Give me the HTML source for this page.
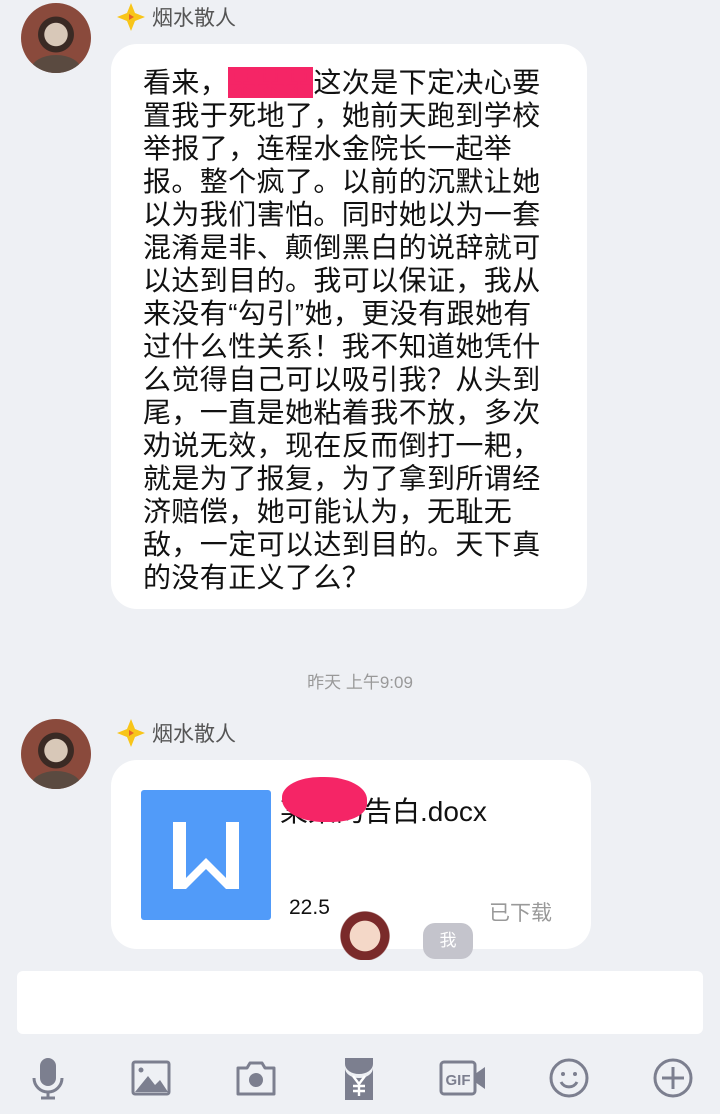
<!DOCTYPE html>
<html><head><meta charset="utf-8"><style>
*{margin:0;padding:0;box-sizing:border-box}
body{width:720px;height:1114px;background:#eef0f4;position:relative;overflow:hidden;font-family:"Liberation Sans","Noto Sans CJK SC",sans-serif}
.av{position:absolute;left:21px;width:70px;height:70px;border-radius:50%;background:radial-gradient(circle at 50% 45%,#d8c8b8 0 22%,#3a2a24 23% 34%,#8a4a3c 35%);overflow:hidden}
.av:after{content:"";position:absolute;left:10px;top:52px;width:50px;height:30px;border-radius:50% 50% 0 0;background:#5a4a40}
.name{position:absolute;left:116px;font-size:21px;color:#555;display:flex;align-items:center;gap:6px}
.star{width:30px;height:30px;position:relative}
.bub{position:absolute;left:111px;background:#fff;border-radius:26px}
.txt{position:absolute;left:143px;top:66px;font-size:28px;line-height:33px;color:#111;letter-spacing:0.4px}
.time{position:absolute;top:668px;width:100%;text-align:center;color:#999;font-size:17px}
.input{position:absolute;left:17px;top:971px;width:686px;height:63px;background:#fff;border-radius:6px}
.icons svg{position:absolute;top:1056px}
</style></head><body>
<div class="av" style="top:3px"></div>
<div class="name" style="top:2px"><svg class="star" viewBox="0 0 30 30"><path d="M15 1 L19 11 L29 15 L19 19 L15 29 L11 19 L1 15 L11 11Z" fill="#f8c519"/><path d="M13 12l5 3-5 3z" fill="#e5632a"/></svg>烟水散人</div>
<div class="bub" style="top:44px;width:476px;height:565px"></div>
<div class="txt">看来，<span style="color:#f52566;background:#f52566">某某某</span>这次是下定决心要<br>置我于死地了，她前天跑到学校<br>举报了，连程水金院长一起举<br>报。整个疯了。以前的沉默让她<br>以为我们害怕。同时她以为一套<br>混淆是非、颠倒黑白的说辞就可<br>以达到目的。我可以保证，我从<br>来没有“勾引”她，更没有跟她有<br>过什么性关系！我不知道她凭什<br>么觉得自己可以吸引我？从头到<br>尾，一直是她粘着我不放，多次<br>劝说无效，现在反而倒打一耙，<br>就是为了报复，为了拿到所谓经<br>济赔偿，她可能认为，无耻无<br>敌，一定可以达到目的。天下真<br>的没有正义了么？</div>
<div class="time">昨天 上午9:09</div>
<div class="av" style="top:719px"></div>
<div class="name" style="top:718px"><svg class="star" viewBox="0 0 30 30"><path d="M15 1 L19 11 L29 15 L19 19 L15 29 L11 19 L1 15 L11 11Z" fill="#f8c519"/><path d="M13 12l5 3-5 3z" fill="#e5632a"/></svg>烟水散人</div>
<div class="bub" style="top:760px;width:480px;height:189px"></div>
<div style="position:absolute;left:141px;top:790px;width:130px;height:130px;background:#519bf9;border-radius:3px"><svg width="130" height="130" viewBox="0 0 130 130"><path d="M32 32h13v56l20-20 20 20V32h13v67H85L65 79 45 99H32z" fill="#fff"/></svg></div>
<div style="position:absolute;left:280px;top:790px;font-size:28px;color:#111">某某的告白.docx</div>
<div style="position:absolute;left:282px;top:777px;width:85px;height:45px;background:#f52566;border-radius:45% 50% 40% 50%"></div>
<div style="position:absolute;left:289px;top:896px;font-size:21px;color:#111">22.5</div>
<div style="position:absolute;left:489px;top:897px;font-size:21px;color:#999">已下载</div>
<div style="position:absolute;left:330px;top:900px;width:70px;height:60px;background:radial-gradient(circle at 50% 60%,#f4d8c8 0 30%,#7a2a2a 31% 48%,transparent 50%)"></div>
<div style="position:absolute;left:423px;top:923px;width:50px;height:36px;background:#c4c4cc;border-radius:12px;color:#fff;font-size:17px;text-align:center;line-height:36px">我</div>
<div class="input"></div>
<div class="icons">
<svg style="left:28px" width="40" height="46" viewBox="0 0 40 46"><rect x="12" y="2" width="16" height="28" rx="8" fill="#7c7f8f"/><path d="M6 22a14 14 0 0 0 28 0" stroke="#7c7f8f" stroke-width="3" fill="none"/><path d="M20 36v5M13 42h14" stroke="#7c7f8f" stroke-width="3"/></svg>
<svg style="left:130px" width="44" height="44" viewBox="0 0 44 44"><rect x="3" y="6" width="36" height="32" rx="2" stroke="#7c7f8f" stroke-width="3" fill="none"/><path d="M5 36l13-16 7 9 5-5 8 12z" fill="#7c7f8f"/><circle cx="11" cy="14" r="2.5" fill="#7c7f8f"/></svg>
<svg style="left:234px" width="44" height="44" viewBox="0 0 44 44"><path d="M4 12h9l3-5h12l3 5h9v26H4z" stroke="#7c7f8f" stroke-width="3" fill="none" stroke-linejoin="round"/><circle cx="22" cy="24" r="7" fill="#7c7f8f"/></svg>
<svg style="left:343px" width="32" height="46" viewBox="0 0 32 46"><path d="M2 2h28v6a14 10 0 0 1-28 0z" fill="#7c7f8f"/><path d="M2 12a14 10 0 0 0 28 0v32H2z" fill="#7c7f8f"/><path d="M10 20l6 8 6-8M16 28v12M10 30h12M10 35h12" stroke="#fff" stroke-width="2.4" fill="none"/></svg>
<svg style="left:438px" width="50" height="44" viewBox="0 0 50 44"><rect x="3" y="6" width="34" height="32" rx="3" stroke="#7c7f8f" stroke-width="3" fill="none"/><path d="M37 18l10-7v22l-10-7z" fill="#7c7f8f"/><text x="20" y="29" font-size="15" font-weight="bold" fill="#7c7f8f" text-anchor="middle" font-family="Liberation Sans">GIF</text></svg>
<svg style="left:547px" width="44" height="44" viewBox="0 0 44 44"><circle cx="22" cy="22" r="18" stroke="#7c7f8f" stroke-width="3" fill="none"/><circle cx="16" cy="18" r="2" fill="#7c7f8f"/><circle cx="28" cy="18" r="2" fill="#7c7f8f"/><path d="M14 26a9 9 0 0 0 16 0" stroke="#7c7f8f" stroke-width="3" fill="none"/></svg>
<svg style="left:651px" width="44" height="44" viewBox="0 0 44 44"><circle cx="22" cy="22" r="18" stroke="#7c7f8f" stroke-width="3" fill="none"/><path d="M22 11v22M11 22h22" stroke="#7c7f8f" stroke-width="3"/></svg>
</div>
</body></html>
